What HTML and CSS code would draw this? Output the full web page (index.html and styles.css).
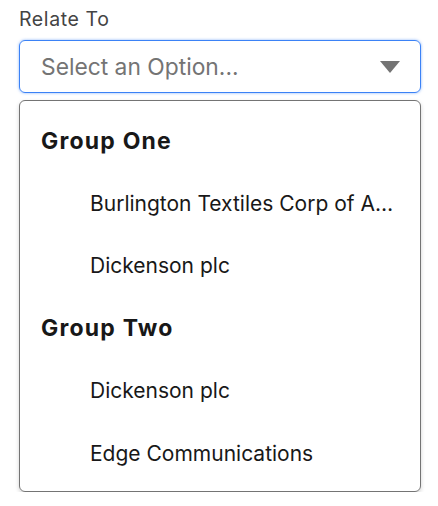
FILE: index.html
```html
<!DOCTYPE html>
<html lang="en">
<head>
    <meta charset="UTF-8">
    <title>Relate To</title>
    <link rel="stylesheet" href="styles.css">
</head>
<body>
    <div class="field">
        <label class="field-label">Relate To</label>

        <!-- Combobox trigger -->
        <div class="combo">
            <span class="placeholder">Select an Option...</span>
            <svg class="caret" width="20" height="12" viewBox="0 0 20 12">
                <path d="M0 0 H20 L10 12 Z" fill="#747474"/>
            </svg>
        </div>

        <!-- Open listbox -->
        <ul class="listbox">
            <li class="group">Group One</li>
            <li class="option"><span>Burlington Textiles Corp of America</span></li>
            <li class="option"><span>Dickenson plc</span></li>
            <li class="group">Group Two</li>
            <li class="option"><span>Dickenson plc</span></li>
            <li class="option"><span>Edge Communications</span></li>
        </ul>
    </div>
</body>
</html>
```

FILE: styles.css
```css
body {
    font-family: 'Inter', 'Noto Sans', sans-serif;
    margin: 0;
    background: #fff;
    color: #181818;
}

.field {
    padding: 6px 17px 0 19px;
}

.field-label {
    display: block;
    font-size: 19.5px;
    letter-spacing: 0.6px;
    line-height: 26px;
    color: #444;
    margin-bottom: 8px;
}

.combo {
    height: 53px;
    box-sizing: border-box;
    border: 1.5px solid #3b82f6;
    border-radius: 6px;
    box-shadow: 0 0 3px rgba(59, 130, 246, 0.6);
    display: flex;
    align-items: center;
    padding: 0 20px 0 21px;
}

.placeholder {
    flex: 1;
    font-size: 22.8px;
    color: #747474;
}

.caret {
    display: block;
}

.listbox {
    list-style: none;
    margin: 7px 0 0;
    padding: 9px 0 7px;
    border: 1px solid #747474;
    border-radius: 6px;
    box-shadow: 0 2px 4px rgba(0, 0, 0, 0.18);
}

.listbox li {
    height: 62.4px;
    display: flex;
    align-items: center;
    font-size: 21px;
}

.group {
    padding-left: 21px;
    font-size: 23px !important;
    font-weight: 700;
    letter-spacing: 1.2px;
}

.option {
    padding-left: 70px;
    padding-right: 24px;
}

.option span {
    white-space: nowrap;
    overflow: hidden;
    text-overflow: ellipsis;
}
```
